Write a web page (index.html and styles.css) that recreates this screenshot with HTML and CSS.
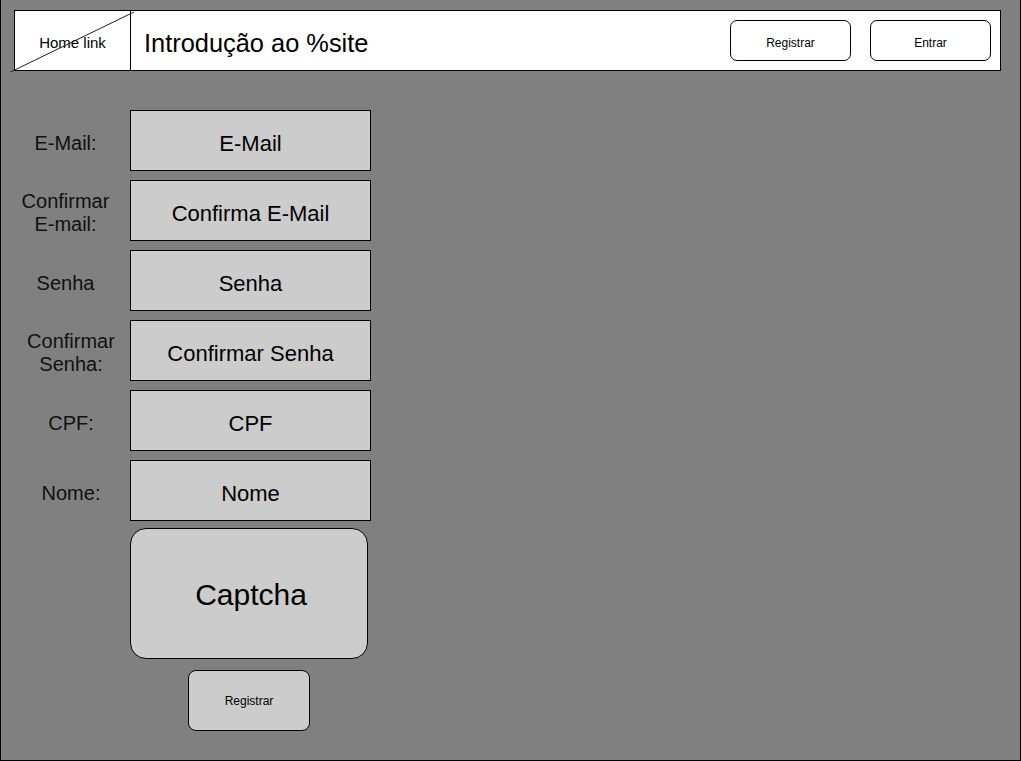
FILE: index.html
```html
<!DOCTYPE html>
<html lang="pt-BR">
<head>
<meta charset="utf-8">
<title>Registrar</title>
<link rel="stylesheet" href="styles.css">
</head>
<body>
<div class="page">
  <header class="topbar">
    <a class="home" href="#">
      <span class="home-text">Home link</span>
      <svg class="home-cross" width="126" height="62" viewBox="0 0 126 62" aria-hidden="true">
        <line x1="0.5" y1="61" x2="124" y2="1" stroke="#222" stroke-width="1"/>
      </svg>
    </a>
    <h1 class="title">Introdução ao %site</h1>
    <nav class="actions">
      <button class="btn">Registrar</button>
      <button class="btn">Entrar</button>
    </nav>
  </header>

  <form class="form">
    <label class="label">E-Mail:</label>
    <div class="field">E-Mail</div>

    <label class="label">Confirmar<br>E-mail:</label>
    <div class="field">Confirma E-Mail</div>

    <label class="label">Senha</label>
    <div class="field">Senha</div>

    <label class="label label--shift">Confirmar<br>Senha:</label>
    <div class="field">Confirmar Senha</div>

    <label class="label label--shift">CPF:</label>
    <div class="field">CPF</div>

    <label class="label label--shift">Nome:</label>
    <div class="field">Nome</div>

    <div class="captcha">Captcha</div>
    <div class="submit-wrap">
      <button type="button" class="btn btn--submit">Registrar</button>
    </div>
  </form>
</div>
</body>
</html>
```

FILE: styles.css
```css
* { box-sizing: border-box; }

html, body {
  margin: 0;
  padding: 0;
  background: #808080;
}

body {
  font-family: "Liberation Sans", Arial, sans-serif;
  color: #000;
}

.page {
  width: 1021px;
  height: 761px;
  background: #808080;
  border: 1px solid #000;
  border-top: none;
  padding-top: 10px;
}

.topbar {
  display: flex;
  align-items: center;
  width: 987px;
  height: 61px;
  margin-left: 13px;
  background: #fff;
  border: 1px solid #000;
}

.home {
  position: relative;
  flex: none;
  display: flex;
  align-items: center;
  justify-content: center;
  width: 116px;
  height: 100%;
  padding-top: 4px;
  border-right: 1px solid #000;
  color: #000;
  text-decoration: none;
  font-size: 15px;
}

.home-cross {
  position: absolute;
  left: -5px;
  top: 0;
  overflow: visible;
}

.title {
  flex: 1;
  margin: 0;
  padding: 5px 0 0 13px;
  font-size: 25.4px;
  font-weight: normal;
}

.actions {
  display: flex;
  gap: 19px;
  padding-right: 9px;
}

.btn {
  width: 121px;
  height: 41px;
  padding: 4px 0 0;
  border: 1px solid #000;
  border-radius: 7px;
  background: #fff;
  font-family: "Liberation Sans", Arial, sans-serif;
  font-size: 12px;
  color: #000;
}

.form {
  display: grid;
  grid-template-columns: 129px 241px;
  row-gap: 9px;
  margin-top: 39px;
}

.label {
  display: flex;
  align-items: center;
  justify-content: center;
  text-align: center;
  padding-top: 5px;
  font-size: 20px;
  line-height: 23px;
  color: #111;
}

.label--shift {
  padding-left: 11px;
}

.field {
  display: flex;
  align-items: center;
  justify-content: center;
  height: 61px;
  padding-top: 6px;
  background: #cccccc;
  border: 1px solid #000;
  font-size: 22px;
}

.captcha {
  grid-column: 2;
  display: flex;
  align-items: center;
  justify-content: center;
  width: 238px;
  height: 131px;
  margin-top: -2px;
  padding: 3px 0 0 4px;
  background: #cccccc;
  border: 1px solid #000;
  border-radius: 16px;
  font-size: 30px;
}

.submit-wrap {
  grid-column: 2;
  display: flex;
  justify-content: center;
  width: 238px;
  margin-top: 2px;
}

.btn--submit {
  width: 122px;
  height: 61px;
  padding-top: 0;
  border-radius: 8px;
  background: #cccccc;
}
```
